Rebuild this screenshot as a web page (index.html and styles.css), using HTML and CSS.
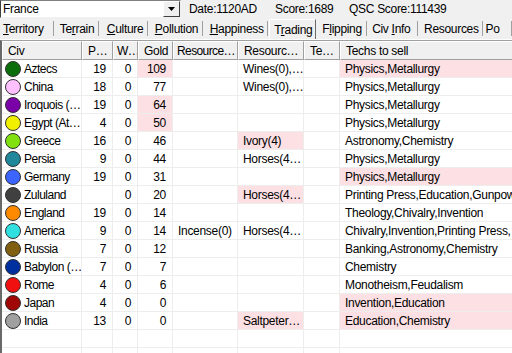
FILE: index.html
```html
<!DOCTYPE html>
<html>
<head>
<meta charset="utf-8">
<link rel="stylesheet" href="styles.css">
</head>
<body>
<div class="topbar">
  <div class="combo">
    <span class="combo-text">France</span>
    <span class="combo-btn"><svg width="7" height="4" viewBox="0 0 7 4"><path d="M0 0h7L3.5 4z" fill="#000"/></svg></span>
  </div>
  <span class="stat stat-date">Date:1120AD</span>
  <span class="stat stat-score">Score:1689</span>
  <span class="stat stat-qsc">QSC Score:111439</span>
</div>
<div class="tabs">
  <div class="tab w-territory"><u>T</u>erritory</div>
  <div class="tab w-terrain">Te<u>r</u>rain</div>
  <div class="tab w-culture"><u>C</u>ulture</div>
  <div class="tab w-pollution"><u>P</u>ollution</div>
  <div class="tab w-happiness"><u>H</u>appiness</div>
  <div class="tab tab-active w-trading">T<u>r</u>ading</div>
  <div class="tab w-flipping">F<u>l</u>ipping</div>
  <div class="tab w-civinfo">Civ <u>I</u>nfo</div>
  <div class="tab w-resources">Resources</div>
  <div class="tab w-po">Po</div>
</div>
<div class="list">
  <div class="row head">
    <div class="hc">Civ</div><div class="hc">P…</div><div class="hc hc-tight">W…</div><div class="hc">Gold</div><div class="hc hc-tight">Resource…</div><div class="hc">Resourc…</div><div class="hc">Te…</div><div class="hc">Techs to sell</div>
  </div>
  <div class="row"><div class="c civ"><i class="dot" style="background:#0a6e0a"></i>Aztecs</div><div class="c n">19</div><div class="c n">0</div><div class="c n pink">109</div><div class="c"></div><div class="c">Wines(0),…</div><div class="c"></div><div class="c pink">Physics,Metallurgy</div></div>
  <div class="row"><div class="c civ"><i class="dot" style="background:#ffc0ff"></i>China</div><div class="c n">18</div><div class="c n">0</div><div class="c n">77</div><div class="c"></div><div class="c">Wines(0),…</div><div class="c"></div><div class="c">Physics,Metallurgy</div></div>
  <div class="row"><div class="c civ"><i class="dot" style="background:#7a00a8"></i>Iroquois (…</div><div class="c n">19</div><div class="c n">0</div><div class="c n pink">64</div><div class="c"></div><div class="c"></div><div class="c"></div><div class="c">Physics,Metallurgy</div></div>
  <div class="row"><div class="c civ"><i class="dot" style="background:#f0f000"></i>Egypt (At…</div><div class="c n">4</div><div class="c n">0</div><div class="c n pink">50</div><div class="c"></div><div class="c"></div><div class="c"></div><div class="c">Physics,Metallurgy</div></div>
  <div class="row"><div class="c civ"><i class="dot" style="background:#80e010"></i>Greece</div><div class="c n">16</div><div class="c n">0</div><div class="c n">46</div><div class="c"></div><div class="c pink">Ivory(4)</div><div class="c"></div><div class="c">Astronomy,Chemistry</div></div>
  <div class="row"><div class="c civ"><i class="dot" style="background:#20889a"></i>Persia</div><div class="c n">9</div><div class="c n">0</div><div class="c n">44</div><div class="c"></div><div class="c">Horses(4…</div><div class="c"></div><div class="c">Physics,Metallurgy</div></div>
  <div class="row"><div class="c civ"><i class="dot" style="background:#3c64ff"></i>Germany</div><div class="c n">19</div><div class="c n">0</div><div class="c n">31</div><div class="c"></div><div class="c"></div><div class="c"></div><div class="c pink">Physics,Metallurgy</div></div>
  <div class="row"><div class="c civ"><i class="dot" style="background:#404040"></i>Zululand</div><div class="c n"></div><div class="c n">0</div><div class="c n">20</div><div class="c"></div><div class="c pink">Horses(4…</div><div class="c"></div><div class="c">Printing Press,Education,Gunpow</div></div>
  <div class="row"><div class="c civ"><i class="dot" style="background:#ff8a00"></i>England</div><div class="c n">19</div><div class="c n">0</div><div class="c n">14</div><div class="c"></div><div class="c"></div><div class="c"></div><div class="c">Theology,Chivalry,Invention</div></div>
  <div class="row"><div class="c civ"><i class="dot" style="background:#30e0e0"></i>America</div><div class="c n">9</div><div class="c n">0</div><div class="c n">14</div><div class="c">Incense(0)</div><div class="c">Horses(4…</div><div class="c"></div><div class="c">Chivalry,Invention,Printing Press,</div></div>
  <div class="row"><div class="c civ"><i class="dot" style="background:#806010"></i>Russia</div><div class="c n">7</div><div class="c n">0</div><div class="c n">12</div><div class="c"></div><div class="c"></div><div class="c"></div><div class="c">Banking,Astronomy,Chemistry</div></div>
  <div class="row"><div class="c civ"><i class="dot" style="background:#0030a0"></i>Babylon (…</div><div class="c n">7</div><div class="c n">0</div><div class="c n">7</div><div class="c"></div><div class="c"></div><div class="c"></div><div class="c">Chemistry</div></div>
  <div class="row"><div class="c civ"><i class="dot" style="background:#f01010"></i>Rome</div><div class="c n">4</div><div class="c n">0</div><div class="c n">6</div><div class="c"></div><div class="c"></div><div class="c"></div><div class="c">Monotheism,Feudalism</div></div>
  <div class="row"><div class="c civ"><i class="dot" style="background:#a00808"></i>Japan</div><div class="c n">4</div><div class="c n">0</div><div class="c n">0</div><div class="c"></div><div class="c"></div><div class="c"></div><div class="c pink">Invention,Education</div></div>
  <div class="row"><div class="c civ"><i class="dot" style="background:#a0a0a0"></i>India</div><div class="c n">13</div><div class="c n">0</div><div class="c n">0</div><div class="c"></div><div class="c pink">Saltpeter…</div><div class="c"></div><div class="c pink">Education,Chemistry</div></div>
  <div class="row"><div class="c"></div><div class="c"></div><div class="c"></div><div class="c"></div><div class="c"></div><div class="c"></div><div class="c"></div><div class="c"></div></div>
  <div class="row"><div class="c"></div><div class="c"></div><div class="c"></div><div class="c"></div><div class="c"></div><div class="c"></div><div class="c"></div><div class="c"></div></div>
</div>
</body>
</html>
```
FILE: styles.css
```css
html, body {
  margin: 0;
  padding: 0;
}
body {
  width: 512px;
  height: 353px;
  overflow: hidden;
  background: #f0f0f0;
  font: 12px "Liberation Sans", "Noto Sans CJK JP", sans-serif;
  letter-spacing: -0.3px;
  color: #000;
}
.topbar {
  display: flex;
  align-items: center;
  height: 18px;
}
.combo {
  width: 181px;
  height: 18px;
  box-sizing: border-box;
  background: #fff;
  border: 1px solid;
  border-color: #808080 #f0f0f0 #f0f0f0 #404040;
  display: flex;
  align-items: center;
  justify-content: space-between;
}
.combo-text {
  padding-left: 2px;
}
.combo-btn {
  width: 17px;
  height: 16px;
  box-sizing: border-box;
  background: #f0f0f0;
  border: 1px solid;
  border-color: #fff #404040 #404040 #fff;
  display: flex;
  align-items: center;
  justify-content: center;
}
.stat-date { margin-left: 8px; width: 86px; }
.stat-score { width: 74px; }
.tabs {
  display: flex;
  height: 21px;
  border-bottom: 1px solid #fff;
}
.tab {
  position: relative;
  box-sizing: border-box;
  padding: 4px 0 0 4px;
  white-space: nowrap;
  overflow: hidden;
}
.tab::after {
  content: "";
  position: absolute;
  right: 0;
  top: 3px;
  height: 15px;
  width: 1px;
  background: #a0a0a0;
  box-shadow: 1px 0 0 #fff;
}
.tab-active {
  margin-top: 1px;
  padding-top: 3px;
  padding-left: 4px;
  border-top: 1px solid #fff;
  border-left: 1px solid #fff;
  border-right: 1px solid #696969;
}
.tab-active::after { display: none; }
.w-territory { width: 55px; padding-left: 3px; }
.w-terrain { width: 46px; padding-left: 6px; }
.w-culture { width: 50px; padding-left: 8px; }
.w-pollution { width: 56px; padding-left: 7px; }
.w-happiness { width: 67px; padding-left: 7px; }
.w-trading { width: 48px; margin-left: 1px; }
.w-flipping { width: 52px; padding-left: 6px; }
.w-civinfo { width: 52px; padding-left: 5px; }
.w-resources { width: 66px; padding-left: 6px; }
.w-po { width: 30px; padding-left: 3px; }
.list {
  border-left: 2px solid #696969;
  border-top: 1px solid #a0a0a0;
  height: 320px;
  overflow: hidden;
  background: #fff;
}
.row {
  display: grid;
  grid-template-columns: 80px 31px 25px 35px 65px 66px 36px 200px;
  height: 18px;
}
.head {
  background: #f0f0f0;
  height: 19px;
}
.hc {
  box-sizing: border-box;
  border-top: 1px solid #fff;
  border-left: 1px solid #fff;
  border-right: 1px solid #a0a0a0;
  border-bottom: 1px solid #a0a0a0;
  padding: 2px 0 0 5px;
  white-space: nowrap;
  overflow: hidden;
}
.hc-tight {
  padding-left: 3px;
  letter-spacing: -0.6px;
}
.c {
  box-sizing: border-box;
  border-right: 1px solid #ededed;
  border-bottom: 1px solid #ededed;
  padding: 2px 0 0 5px;
  white-space: nowrap;
  overflow: hidden;
}
.n {
  text-align: right;
  padding: 2px 6px 0 0;
}
.pink { background: #fde0e4; }
.civ {
  display: flex;
  align-items: center;
  padding: 0 0 0 3px;
  letter-spacing: -0.5px;
}
.dot {
  display: block;
  width: 14px;
  height: 14px;
  border-radius: 50%;
  border: 1px solid #303030;
  margin-right: 3px;
  flex: none;
}
```
